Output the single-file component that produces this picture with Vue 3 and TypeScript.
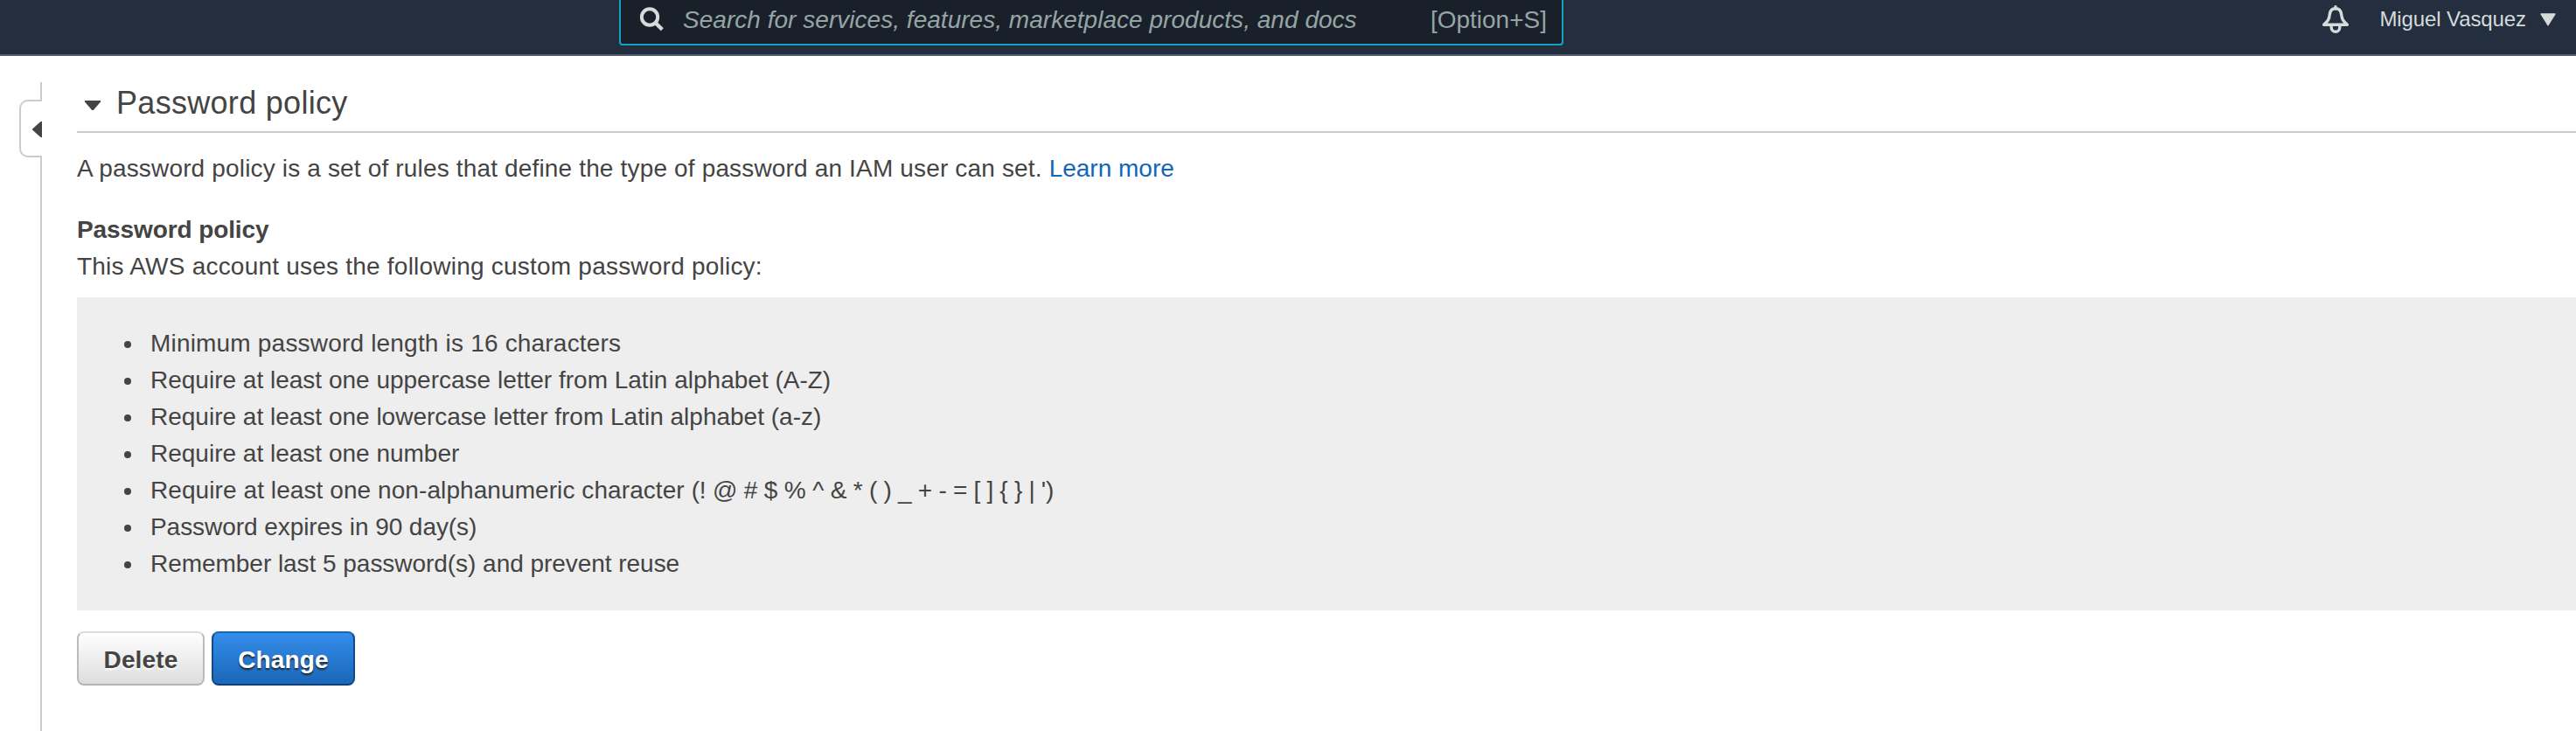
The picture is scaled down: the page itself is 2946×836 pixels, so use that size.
<script setup lang="ts">
const userName: string = 'Miguel Vasquez'

interface Rule {
  id: string
  text: string
}

const rules: Rule[] = [
  { id: 'length', text: 'Minimum password length is 16 characters' },
  { id: 'upper', text: 'Require at least one uppercase letter from Latin alphabet (A-Z)' },
  { id: 'lower', text: 'Require at least one lowercase letter from Latin alphabet (a-z)' },
  { id: 'number', text: 'Require at least one number' },
  { id: 'symbol', text: 'Require at least one non-alphanumeric character ' },
  { id: 'expiry', text: 'Password expires in 90 day(s)' },
  { id: 'reuse', text: 'Remember last 5 password(s) and prevent reuse' },
]
</script>

<template>
  <div class="page">
    <header class="topbar">
      <div class="search">
        <svg class="search-icon" width="28" height="28" viewBox="0 0 28 28">
          <circle cx="11" cy="11.5" r="9.2" fill="none" stroke="#d5dbdb" stroke-width="4" />
          <path d="M17.5 18 25.3 25.8" stroke="#d5dbdb" stroke-width="4.4" />
        </svg>
        <span class="placeholder">Search for services, features, marketplace products, and docs</span>
        <span class="shortcut">[Option+S]</span>
      </div>
      <div class="account">
        <svg class="bell" width="32" height="32" viewBox="0 0 32 32">
          <g fill="none" stroke="#d5dbdb" stroke-width="3.4" stroke-linejoin="round">
            <path d="M16 3.700C12 3.700 9.800 6.500 9.300 10.500C8.700 16 7.800 17.400 2.600 22.300H29.400C24.200 17.400 23.300 16 22.700 10.500C22.200 6.500 20 3.700 16 3.700Z" />
            <path d="M11.200 22.500V25.500A4.800 4.800 0 0 0 20.800 25.500V22.500" />
            <path d="M16 4V1.800" stroke-linecap="round" />
          </g>
        </svg>
        <span class="user">{{ userName }}</span>
        <svg class="user-caret" width="18" height="15" viewBox="0 0 18 15">
          <path d="M1.200 1H16.800L9 13.600Z" fill="#d5dbdb" stroke="#d5dbdb" stroke-width="1.600" stroke-linejoin="round" />
        </svg>
      </div>
    </header>

    <div class="body">
      <aside class="rail">
        <div class="rail-top"></div>
        <div class="rail-tab">
          <svg width="11" height="18" viewBox="0 0 11 18"><path d="M11 0V18H9.500L0 9.500V8.500L9.500 0Z" fill="#444" /></svg>
        </div>
        <div class="rail-line"></div>
      </aside>

      <main class="content">
        <div class="section-head">
          <svg class="section-caret" width="18" height="11" viewBox="0 0 18 11"><path d="M0 0H18V1.500L9.800 11H8.200L0 1.500Z" fill="#444" /></svg>
          <h2 class="title">Password policy</h2>
        </div>
        <p class="description">A password policy is a set of rules that define the type of password an IAM user can set. <a class="link">Learn more</a></p>
        <h3 class="subtitle">Password policy</h3>
        <p class="intro">This AWS account uses the following custom password policy:</p>
        <ul class="rules">
          <li v-for="rule in rules" :key="rule.id" :class="rule.id">
            <span class="rule-text">{{ rule.text }}<template v-if="rule.id === 'symbol'"><span class="marks">(! @ # $ % ^ &amp; * </span><span class="brackets">( ) _ + - = [ ] { } | ')</span></template></span>
          </li>
        </ul>
        <div class="actions">
          <button type="button" class="btn btn-delete">Delete</button>
          <button type="button" class="btn btn-change">Change</button>
        </div>
      </main>
    </div>
  </div>
</template>

<style>
body {
  margin: 0;
  background: #fff;
}
</style>

<style scoped>
.page {
  width: 100%;
  height: 836px;
  overflow: hidden;
  display: flex;
  flex-direction: column;
  background: #fff;
  color: #444;
  font-family: "Liberation Sans", Arial, sans-serif;
  font-size: 28px;
  line-height: 42px;
  white-space: nowrap;
}

.topbar {
  box-sizing: border-box;
  flex: none;
  height: 64px;
  padding-left: 708px;
  display: flex;
  align-items: flex-start;
  justify-content: space-between;
  background: #232f3e;
  border-bottom: 2px solid #545b69;
}

.search {
  box-sizing: border-box;
  width: 1080px;
  height: 52px;
  padding: 0 17px 0 22px;
  display: flex;
  border: 2px solid #16a0c6;
  border-top: 0;
  border-radius: 0 0 4px 4px;
  background: #1a2029;
  color: #95a5a6;
}

.search-icon {
  flex: none;
  margin-top: 8px;
}

.placeholder {
  margin: 2px 0 0 21px;
  font-style: italic;
  letter-spacing: 0.03px;
}

.shortcut {
  margin: 2px 0 0 auto;
}

.account {
  display: flex;
  padding-right: 23px;
  color: #d5dbdb;
}

.bell {
  margin-top: 6px;
}

.user {
  margin: 1px 16px 0 34px;
  font-size: 24px;
  letter-spacing: -0.1px;
}

.user-caret {
  margin-top: 15px;
}

.body {
  flex: 1;
  display: flex;
  min-height: 0;
}

.rail {
  box-sizing: border-box;
  flex: none;
  width: 48px;
  padding: 30px 0 0 22px;
  display: flex;
  flex-direction: column;
}

.rail-top {
  height: 20px;
  border-right: 2px solid #ccc;
}

.rail-tab {
  box-sizing: border-box;
  height: 66px;
  padding-top: 2px;
  display: flex;
  align-items: center;
  justify-content: flex-end;
  border: 2px solid #ccc;
  border-right: 0;
  border-radius: 10px 0 0 10px;
}

.rail-line {
  flex: 1;
  border-right: 2px solid #ccc;
}

.content {
  flex: 1;
  min-width: 0;
  padding-left: 40px;
}

.section-head {
  box-sizing: border-box;
  height: 88px;
  padding-left: 9px;
  display: flex;
  border-bottom: 2px solid #ccc;
}

.section-caret {
  margin-top: 51px;
}

.title {
  margin: 33px 0 0 18px;
  font-size: 36px;
  line-height: 42px;
  font-weight: 400;
  letter-spacing: 0.3px;
}

.description {
  margin: 20px 0 0;
  letter-spacing: 0.16px;
}

.link {
  color: #1166bb;
  letter-spacing: 0;
}

.subtitle {
  margin: 28px 0 0;
  font-size: 28px;
  font-weight: 700;
  letter-spacing: -0.1px;
}

.intro {
  margin: 0;
  letter-spacing: 0.22px;
}

.rules {
  box-sizing: border-box;
  height: 358px;
  margin: 14px 0 0;
  padding: 32px 0 0 54px;
  list-style: none;
  background: #eee;
}

.rules li {
  display: flex;
  align-items: center;
}

.rules li::before {
  content: "";
  width: 8px;
  height: 8px;
  margin: 2px 22px 0 0;
  border-radius: 50%;
  background: #444;
}

.rule-text {
  white-space: pre;
}

.length {
  letter-spacing: 0.19px;
}

.symbol {
  letter-spacing: 0.08px;
}

.marks {
  letter-spacing: -0.18px;
}

.brackets {
  letter-spacing: -0.3px;
}

.expiry {
  letter-spacing: -0.06px;
}

.reuse {
  letter-spacing: -0.04px;
}

.actions {
  display: flex;
  gap: 8px;
  margin-top: 24px;
}

.btn {
  box-sizing: border-box;
  height: 62px;
  padding: 3px 0 0;
  border: 2px solid;
  border-radius: 8px;
  font: 700 28px/42px "Liberation Sans", Arial, sans-serif;
  letter-spacing: 0.15px;
}

.btn-delete {
  width: 146px;
  color: #444;
  border-color: #ddd #bbb #b4b4b4;
  background: linear-gradient(#fff, #ddd);
  text-shadow: 0 2px 2px #fff;
}

.btn-change {
  width: 164px;
  color: #fff;
  border-color: #1a67b8 #124a86 #0f4176;
  background: linear-gradient(#338deb, #1b67b8);
  text-shadow: 0 2px 2px #222;
}
</style>
